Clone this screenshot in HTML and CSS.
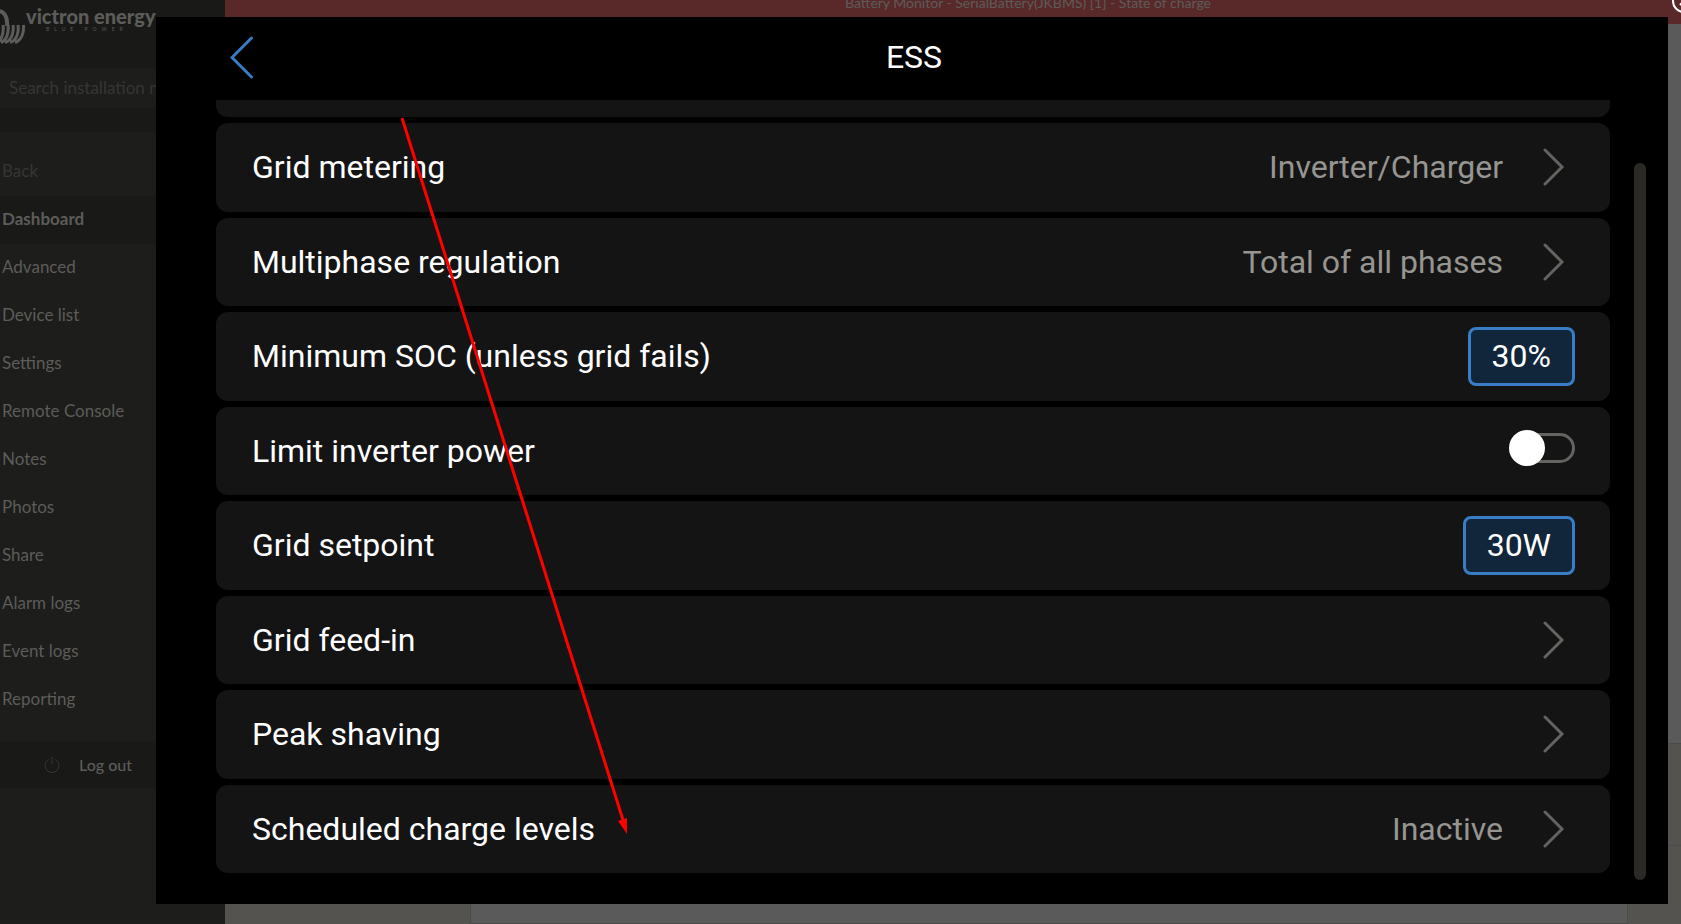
FILE: index.html
```html
<!DOCTYPE html>
<html lang="en">
<head>
<meta charset="utf-8">
<title>Remote Console - ESS</title>
<link rel="stylesheet" href="styles.css">
</head>
<body>
<div class="app">
  <aside class="sidebar">
    <div class="brand">
      <svg class="brand-mark" width="26" height="44" viewBox="0 0 26 44" aria-hidden="true">
        <path class="brand-loop" d="M-2 11C4 11 8 17 7 26"/>
        <path d="M3 25C4 32 2 40-3 42.500M8 25C9 32 7 40 1 42.500M13 25C14 32 12 40 5 42.500M18 25C19 32 17 40 10 42.500M23.500 25C24 32 22 40 15 42.500"/>
      </svg>
      <div class="brand-text">
        <span class="brand-name">victron energy</span>
        <span class="brand-tag">BLUE POWER</span>
      </div>
    </div>
    <input class="search" type="text" placeholder="Search installation name" aria-label="Search installation">
    <nav class="menu">
      <a class="item back" href="#">Back</a>
      <a class="item active" href="#">Dashboard</a>
      <a class="item" href="#">Advanced</a>
      <a class="item" href="#">Device list</a>
      <a class="item" href="#">Settings</a>
      <a class="item" href="#">Remote Console</a>
      <a class="item" href="#">Notes</a>
      <a class="item" href="#">Photos</a>
      <a class="item" href="#">Share</a>
      <a class="item" href="#">Alarm logs</a>
      <a class="item" href="#">Event logs</a>
      <a class="item" href="#">Reporting</a>
    </nav>
    <button class="logout" type="button">
      <svg width="16" height="16" viewBox="0 0 16 16" aria-hidden="true"><path d="M4.500 2.500A7 7 0 1 0 11.500 2.500M8 0V7"/></svg>
      <span>Log out</span>
    </button>
  </aside>
  <main class="main">
    <div class="alert">Battery Monitor - SerialBattery(JKBMS) [1] - State of charge</div>
    <div class="dashboard">
      <div class="panel-top"></div>
      <div class="panel-left"></div>
      <div class="panel-mid"></div>
      <div class="panel-right"></div>
    </div>
  </main>
</div>

<div class="overlay">
  <button class="close" type="button" aria-label="Close">
    <svg width="24" height="24" viewBox="0 0 24 24" aria-hidden="true"><circle cx="12" cy="12" r="11"/><path d="M8 16l8-8M16 16l-8-8"/></svg>
  </button>
  <section class="console">
    <header class="console-head">
      <button class="back-btn" type="button" aria-label="Go back">
        <svg width="24" height="44" viewBox="0 0 24 44" aria-hidden="true"><path d="M21.500 3L2 22.500L21.500 42"/></svg>
      </button>
      <h1>ESS</h1>
    </header>
    <div class="console-body">
      <div class="list">
        <div class="row-tail"></div>
        <button class="row" type="button"><span class="label">Grid metering</span><span class="value">Inverter/Charger</span><svg class="chev" viewBox="0 0 22 38"><path d="M2 2L19 19L2 36"/></svg></button>
        <button class="row" type="button"><span class="label">Multiphase regulation</span><span class="value">Total of all phases</span><svg class="chev" viewBox="0 0 22 38"><path d="M2 2L19 19L2 36"/></svg></button>
        <div class="row"><span class="label">Minimum SOC (unless grid fails)</span><button class="chip" type="button">30%</button></div>
        <div class="row"><label class="label" for="limit">Limit inverter power</label><input class="toggle" id="limit" type="checkbox"></div>
        <div class="row"><span class="label">Grid setpoint</span><button class="chip" type="button">30W</button></div>
        <button class="row" type="button"><span class="label">Grid feed-in</span><svg class="chev" viewBox="0 0 22 38"><path d="M2 2L19 19L2 36"/></svg></button>
        <button class="row" type="button"><span class="label">Peak shaving</span><svg class="chev" viewBox="0 0 22 38"><path d="M2 2L19 19L2 36"/></svg></button>
        <button class="row" type="button"><span class="label">Scheduled charge levels</span><span class="value">Inactive</span><svg class="chev" viewBox="0 0 22 38"><path d="M2 2L19 19L2 36"/></svg></button>
      </div>
      <div class="scroll"></div>
    </div>
    <svg class="arrow" width="230" height="720" viewBox="0 0 230 720" aria-hidden="true">
      <path class="arrow-line" d="M2 2L223 704"/>
      <path class="arrow-head" d="M227 718L218 705L227 702Z"/>
    </svg>
  </section>
</div>
</body>
</html>
```
FILE: styles.css
```css
* { box-sizing: border-box; }

body {
  margin: 0;
  height: 100vh;
  overflow: hidden;
  position: relative;
  background: #1d1d1b;
  font-family: Lato, "Open Sans", sans-serif;
}

button {
  margin: 0;
  padding: 0;
  border: 0;
  background: none;
  font: inherit;
  color: inherit;
  text-align: left;
}

svg { fill: none; flex: none; }

.app { display: flex; height: 100%; }

/* Sidebar */
.sidebar {
  width: 225px;
  flex: none;
  background: #1d1d1b;
  color: #5c5c5a;
  font-size: 17px;
}

.brand {
  display: flex;
  height: 68px;
  background: #191917;
}

.brand-mark { stroke: #5c5c5a; stroke-width: 3; }
.brand-loop { stroke-width: 4; }

.brand-text { display: flex; flex-direction: column; padding-top: 5px; }

.brand-name { font-size: 20px; line-height: 22px; font-weight: 900; white-space: nowrap; }

.brand-tag {
  padding-left: 20px;
  font-size: 5px;
  line-height: 5px;
  letter-spacing: 5px;
}

.search {
  display: block;
  width: 100%;
  height: 40px;
  padding: 0 9px 2px;
  border: 0;
  background: #1d1d1b;
  color: #5c5c5a;
  font: inherit;
}

.search::placeholder { color: #363634; opacity: 1; }

.menu {
  display: flex;
  flex-direction: column;
  border-top: 24px solid #191917;
  padding: 16px 0 17px;
}

.item {
  height: 48px;
  padding: 0 2px;
  line-height: 46px;
  color: inherit;
  text-decoration: none;
}

.back { color: #363634; }

.active { background: #191917; font-weight: 700; }

.logout {
  display: flex;
  align-items: center;
  gap: 19px;
  width: 100%;
  height: 47px;
  padding-left: 44px;
  background: #191917;
  font-size: 16px;
  font-weight: 500;
}

.logout svg { stroke: #363634; stroke-width: 1; }

/* Dashboard behind the console */
.main { flex: 1; display: flex; flex-direction: column; background: #545350; }

.alert {
  height: 24px;
  padding-left: 150px;
  background: #592929;
  color: #5c5c5a;
  font-size: 14px;
  line-height: 6px;
  text-align: center;
}

.dashboard {
  flex: 1;
  display: grid;
  grid-template-columns: 245px 1fr 53px;
  grid-template-rows: 720px 102px 1fr;
}

.panel-top { grid-column: 1 / 4; background: #5a5a5a; border-bottom: 1px solid #4b4b4a; }
.panel-left { grid-column: 1; grid-row: 2 / 4; }
.panel-mid { grid-column: 2; grid-row: 2 / 4; background: #5a5a5a; border: solid #4b4b4a; border-width: 0 1px 1px; }
.panel-right { grid-column: 3; grid-row: 2; border-bottom: 1px solid #4b4b4a; }

/* Console window */
.overlay {
  position: absolute;
  inset: 0;
  overflow: hidden;
  padding: 17px 13px 20px 156px;
}

.close { position: absolute; top: -11px; right: -15px; height: 24px; }
.close svg { display: block; stroke: #fff; stroke-width: 2; }

.console {
  position: relative;
  display: flex;
  flex-direction: column;
  height: 100%;
  background: #000;
  color: #fff;
  font-family: Roboto, sans-serif;
  font-size: 32px;
  line-height: 40px;
}

.console-head {
  display: grid;
  grid-template-columns: 24px 1fr 24px;
  align-items: center;
  height: 83px;
  padding: 0 70px 3px 74px;
}

.back-btn svg { display: block; stroke: #387dc5; stroke-width: 3; stroke-linecap: round; }

h1 { margin: 0; font-size: 32px; font-weight: 400; text-align: center; }

.console-body { flex: 1; display: flex; gap: 24px; padding: 0 22px 24px 60px; }

.list { flex: 1; display: flex; flex-direction: column; gap: 6px; padding-bottom: 7px; }

.row-tail { height: 17px; background: #141414; border-radius: 0 0 12px 12px; }

.row {
  flex: 1;
  display: flex;
  align-items: center;
  padding: 0 35px 0 36px;
  border-radius: 12px;
  background: #141414;
}

.label { flex: 1; }
.value { color: #969591; }

.chev { width: 22px; height: 38px; margin: 0 10px 0 40px; stroke: #64635f; stroke-width: 3; stroke-linecap: round; }

.chip {
  height: 59px;
  padding: 0 21px;
  border: 3px solid #387dc5;
  border-radius: 8px;
  background: #11263b;
}

.toggle {
  appearance: none;
  position: relative;
  width: 60px;
  height: 30px;
  margin: 0 0 6px;
  border: 3px solid #64635f;
  border-radius: 15px;
}

.toggle::before {
  content: "";
  position: absolute;
  top: -6px;
  left: -9px;
  width: 36px;
  height: 36px;
  border-radius: 50%;
  background: #fff;
}

.scroll { width: 12px; margin-top: 63px; border-radius: 6px; background: #2a2925; }

/* Pointer drawn over the list */
.arrow { position: absolute; left: 244px; top: 99px; pointer-events: none; }
.arrow-line { stroke: #f00; stroke-width: 3; }
.arrow-head { fill: #f00; }
```
